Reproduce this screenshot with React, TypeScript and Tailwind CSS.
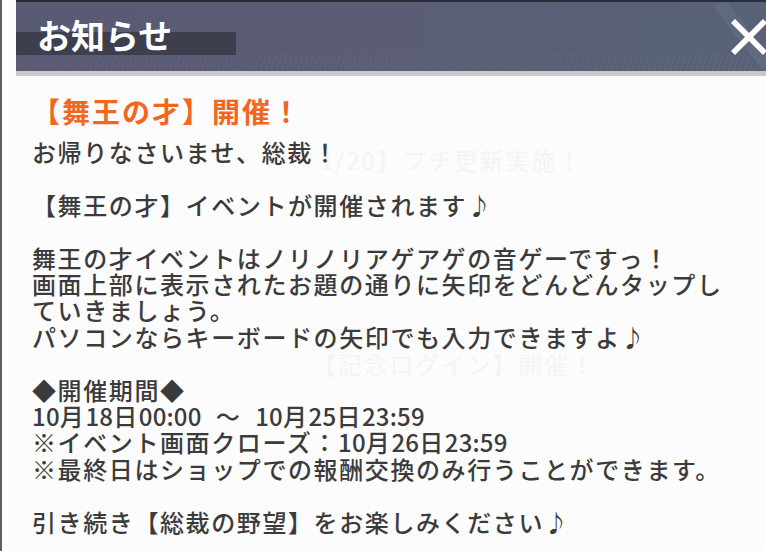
import { X } from "lucide-react";

const jp = "font-['Noto_Sans_CJK_JP','Noto_Sans',sans-serif]";

const Num = ({ children }: { children: React.ReactNode }) => (
  <span className="tracking-[0.2px]">{children}</span>
);

const App = () => {
  return (
    <div className={`relative h-[551px] w-[766px] overflow-hidden border-l-2 border-[#5e5e5e] bg-[#fcfcfc] ${jp}`}>
      {/* header */}
      <div className="ml-[14px]">
        <div className="relative h-[71px] overflow-hidden border-t-2 border-[#2b2c3a] bg-[linear-gradient(90deg,#595a74_0%,#5a5d75_50%,#586277_100%)]">
          <div className="absolute inset-x-0 bottom-0 h-[18px] bg-[repeating-linear-gradient(110deg,rgba(255,255,255,0.04)_0px,rgba(255,255,255,0.04)_1px,transparent_1px,transparent_5px)]" />
          <div className="absolute left-0 top-[30px] h-[23px] w-[220px] bg-[#3d3e4e]" />
          <h1 className="relative pl-[21px] pt-[11px] text-[34px] font-bold leading-[44px] text-white">
            お知らせ
          </h1>
          <div className="absolute left-[722px] top-[-8px] h-[84px] w-[14px] rotate-[-38deg] bg-white/[0.05]" />
          <X className="absolute left-[701px] top-[3px] h-[64px] w-[64px] text-white" strokeWidth={2.1} strokeLinecap="butt" />
        </div>
        <div className="h-[5px] bg-[#c9c9c9]" />
      </div>

      {/* ghost text from the page underneath */}
      <div className="pointer-events-none absolute left-[318px] top-[146px] whitespace-nowrap text-[24px] leading-[27px] tracking-[1.8px] text-[#f4f4f4]">
        1/20】プチ更新実施！
      </div>
      <div className="pointer-events-none absolute left-[310px] top-[350px] whitespace-nowrap text-[24px] leading-[27px] tracking-[1.8px] text-[#f4f4f4]">
        【記念ログイン】開催！
      </div>

      {/* body */}
      <div className="relative px-[30px] pt-[18px]">
        <h2 className="whitespace-nowrap text-[28px] font-bold leading-[34px] tracking-[2px] text-[#f26620]">
          【舞王の才】開催！
        </h2>
        <div className="mt-[11px] whitespace-nowrap text-[24px] font-medium leading-[26.4px] tracking-[1.6px] text-[#3b3b3b]">
          <p>お帰りなさいませ、総裁！</p>
          <p>&nbsp;</p>
          <p>【舞王の才】イベントが開催されます♪</p>
          <p>&nbsp;</p>
          <p>舞王の才イベントはノリノリアゲアゲの音ゲーですっ！</p>
          <p>画面上部に表示されたお題の通りに矢印をどんどんタップし</p>
          <p>ていきましょう。</p>
          <p>パソコンならキーボードの矢印でも入力できますよ♪</p>
          <p>&nbsp;</p>
          <p>◆開催期間◆</p>
          <p>
            <Num>10</Num>月<Num>18</Num>日<Num>00:00</Num>
            <span className="mx-[14px]">～</span>
            <Num>10</Num>月<Num>25</Num>日<Num>23:59</Num>
          </p>
          <p>
            ※イベント画面クローズ：<Num>10</Num>月<Num>26</Num>日<Num>23:59</Num>
          </p>
          <p>※最終日はショップでの報酬交換のみ行うことができます。</p>
          <p>&nbsp;</p>
          <p>引き続き【総裁の野望】をお楽しみください♪</p>
        </div>
      </div>
    </div>
  );
};

export default App;
